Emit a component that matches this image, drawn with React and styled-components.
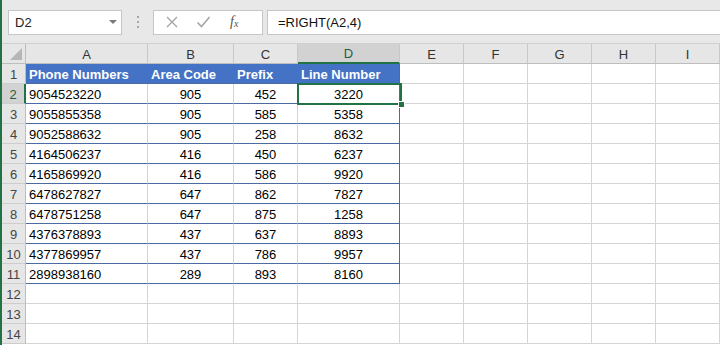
import React from 'react';
import styled, { createGlobalStyle } from 'styled-components';

const GlobalStyle = createGlobalStyle`
  html, body { margin: 0; padding: 0; background: #fff; }
  * { box-sizing: border-box; }
`;

const GREEN = '#217346';
const GRID = '#d4d4d4';
const TBL = '#4a6ca3';
const BLUE = '#4472c4';

const cols = ['A', 'B', 'C', 'D', 'E', 'F', 'G', 'H', 'I'];

const data = [
  ['9054523220', '905', '452', '3220'],
  ['9055855358', '905', '585', '5358'],
  ['9052588632', '905', '258', '8632'],
  ['4164506237', '416', '450', '6237'],
  ['4165869920', '416', '586', '9920'],
  ['6478627827', '647', '862', '7827'],
  ['6478751258', '647', '875', '1258'],
  ['4376378893', '437', '637', '8893'],
  ['4377869957', '437', '786', '9957'],
  ['2898938160', '289', '893', '8160'],
];

const headers = ['Phone Numbers', 'Area Code', 'Prefix', 'Line Number'];

const Window = styled.div`
  width: 720px;
  height: 345px;
  overflow: hidden;
  border-left: 2px solid ${GREEN};
  font-family: "Liberation Sans", Arial, sans-serif;
  display: flex;
  flex-direction: column;
`;

const Toolbar = styled.div`
  height: 43px;
  flex: none;
  background: #e8e8e8;
  display: flex;
  align-items: center;
  padding-left: 6px;
  padding-top: 1px;
`;

const NameBox = styled.div`
  width: 114px;
  height: 25px;
  background: #fff;
  border: 1px solid #c6c6c6;
  display: flex;
  align-items: center;
  justify-content: space-between;
  padding: 0 4px 0 6px;
  font-size: 13px;
  color: #222;
`;

const Arrow = styled.span`
  width: 0;
  height: 0;
  border-left: 4px solid transparent;
  border-right: 4px solid transparent;
  border-top: 4px solid #7a7a7a;
`;

const Dots = styled.div`
  width: 31px;
  display: flex;
  flex-direction: column;
  align-items: center;
  gap: 3px;
  span {
    width: 2px;
    height: 2px;
    background: #a8a8a8;
  }
`;

const FxBox = styled.div`
  width: 110px;
  height: 25px;
  background: #fff;
  border: 1px solid #c6c6c6;
  display: flex;
  align-items: center;
  padding-left: 11px;
  gap: 17px;
`;

const Fx = styled.span`
  font-family: "Liberation Serif", "Times New Roman", serif;
  font-style: italic;
  font-size: 14px;
  color: #555;
  margin-left: 2px;
  sub {
    font-size: 10px;
    vertical-align: baseline;
    position: relative;
    top: 1px;
  }
`;

const Formula = styled.div`
  flex: 1;
  height: 25px;
  margin-left: 4px;
  background: #fff;
  border: 1px solid #c6c6c6;
  border-right: none;
  display: flex;
  align-items: center;
  padding-left: 10px;
  font-size: 13px;
  color: #111;
`;

const Sheet = styled.div`
  position: relative;
  display: grid;
  grid-template-columns: 24px 122px 86px 64px 102px 64px 64px 64px 64px 64px;
  grid-auto-rows: 20px;
  border-top: 1px solid #d0d0d0;
`;

const ColHead = styled.div`
  background: ${p => (p.$sel ? '#d2d2d2' : '#e6e6e6')};
  color: ${p => (p.$sel ? '#1e5e3a' : '#333')};
  border-right: 1px solid #c8c8c8;
  border-bottom: ${p => (p.$sel ? `2px solid ${GREEN}` : '1px solid #bdbdbd')};
  font-size: 13px;
  display: flex;
  align-items: center;
  justify-content: center;
  padding-top: 1px;
`;

const Corner = styled.div`
  background: #e6e6e6;
  border-right: 1px solid #bdbdbd;
  border-bottom: 1px solid #bdbdbd;
  display: flex;
  align-items: flex-end;
  justify-content: flex-end;
  padding: 0 3px 3px 0;
`;

const CornerTri = styled.span`
  width: 0;
  height: 0;
  border-left: 12px solid transparent;
  border-bottom: 12px solid #b6b6b6;
`;

const RowHead = styled.div`
  background: ${p => (p.$sel ? '#d2d2d2' : '#e6e6e6')};
  color: ${p => (p.$sel ? '#1e5e3a' : '#444')};
  border-right: ${p => (p.$sel ? `2px solid ${GREEN}` : '1px solid #bdbdbd')};
  border-bottom: 1px solid #cdcdcd;
  font-size: 13px;
  display: flex;
  align-items: center;
  justify-content: center;
  padding-top: 1px;
`;

const Cell = styled.div`
  background: ${p => (p.$head ? BLUE : '#fff')};
  color: ${p => (p.$head ? '#fff' : '#000')};
  font-weight: ${p => (p.$head ? 700 : 400)};
  border-right: 1px solid ${p => p.$right || GRID};
  border-bottom: 1px solid ${p => p.$bottom || GRID};
  font-size: 13px;
  display: flex;
  align-items: center;
  justify-content: ${p => (p.$center ? 'center' : 'flex-start')};
  padding: 1px 3px 0;
  white-space: nowrap;
  overflow: hidden;
`;

const Selection = styled.div`
  position: absolute;
  left: 295px;
  top: 39px;
  width: 105px;
  height: 22px;
  border: 2px solid ${GREEN};
  pointer-events: none;
`;

const Handle = styled.span`
  position: absolute;
  right: -5px;
  bottom: -5px;
  width: 7px;
  height: 7px;
  background: ${GREEN};
  border: 1px solid #fff;
`;

function CellFor({ r, c }) {
  // r: sheet row number, c: column index (0 = A)
  if (r === 1 && c < 4) {
    return (
      <Cell $head $right={c === 3 ? TBL : BLUE} $bottom={TBL}>
        {headers[c]}
      </Cell>
    );
  }
  if (r >= 2 && r <= 11 && c < 4) {
    return (
      <Cell $center={c > 0} $bottom={TBL} $right={c === 3 ? TBL : GRID}>
        {data[r - 2][c]}
      </Cell>
    );
  }
  return <Cell />;
}

const CrossIcon = () => (
  <svg width="14" height="14" viewBox="0 0 14 14">
    <path d="M2 2 L12 12 M12 2 L2 12" stroke="#a6a6a6" strokeWidth="1.4" fill="none" />
  </svg>
);

const CheckIcon = () => (
  <svg width="15" height="14" viewBox="0 0 15 14">
    <path d="M1.5 7.5 L5.5 11.5 L13.5 2" stroke="#a6a6a6" strokeWidth="1.6" fill="none" />
  </svg>
);

export default function App() {
  const rows = Array.from({ length: 14 }, (_, i) => i + 1);
  return (
    <Window>
      <GlobalStyle />
      <Toolbar>
        <NameBox>
          D2
          <Arrow />
        </NameBox>
        <Dots>
          <span />
          <span />
          <span />
        </Dots>
        <FxBox>
          <CrossIcon />
          <CheckIcon />
          <Fx>
            f<sub>x</sub>
          </Fx>
        </FxBox>
        <Formula>=RIGHT(A2,4)</Formula>
      </Toolbar>
      <Sheet>
        <Corner>
          <CornerTri />
        </Corner>
        {cols.map(c => (
          <ColHead key={c} $sel={c === 'D'}>
            {c}
          </ColHead>
        ))}
        {rows.map(r => (
          <React.Fragment key={r}>
            <RowHead $sel={r === 2}>{r}</RowHead>
            {cols.map((c, ci) => (
              <CellFor key={c} r={r} c={ci} />
            ))}
          </React.Fragment>
        ))}
        <Selection>
          <Handle />
        </Selection>
      </Sheet>
    </Window>
  );
}
